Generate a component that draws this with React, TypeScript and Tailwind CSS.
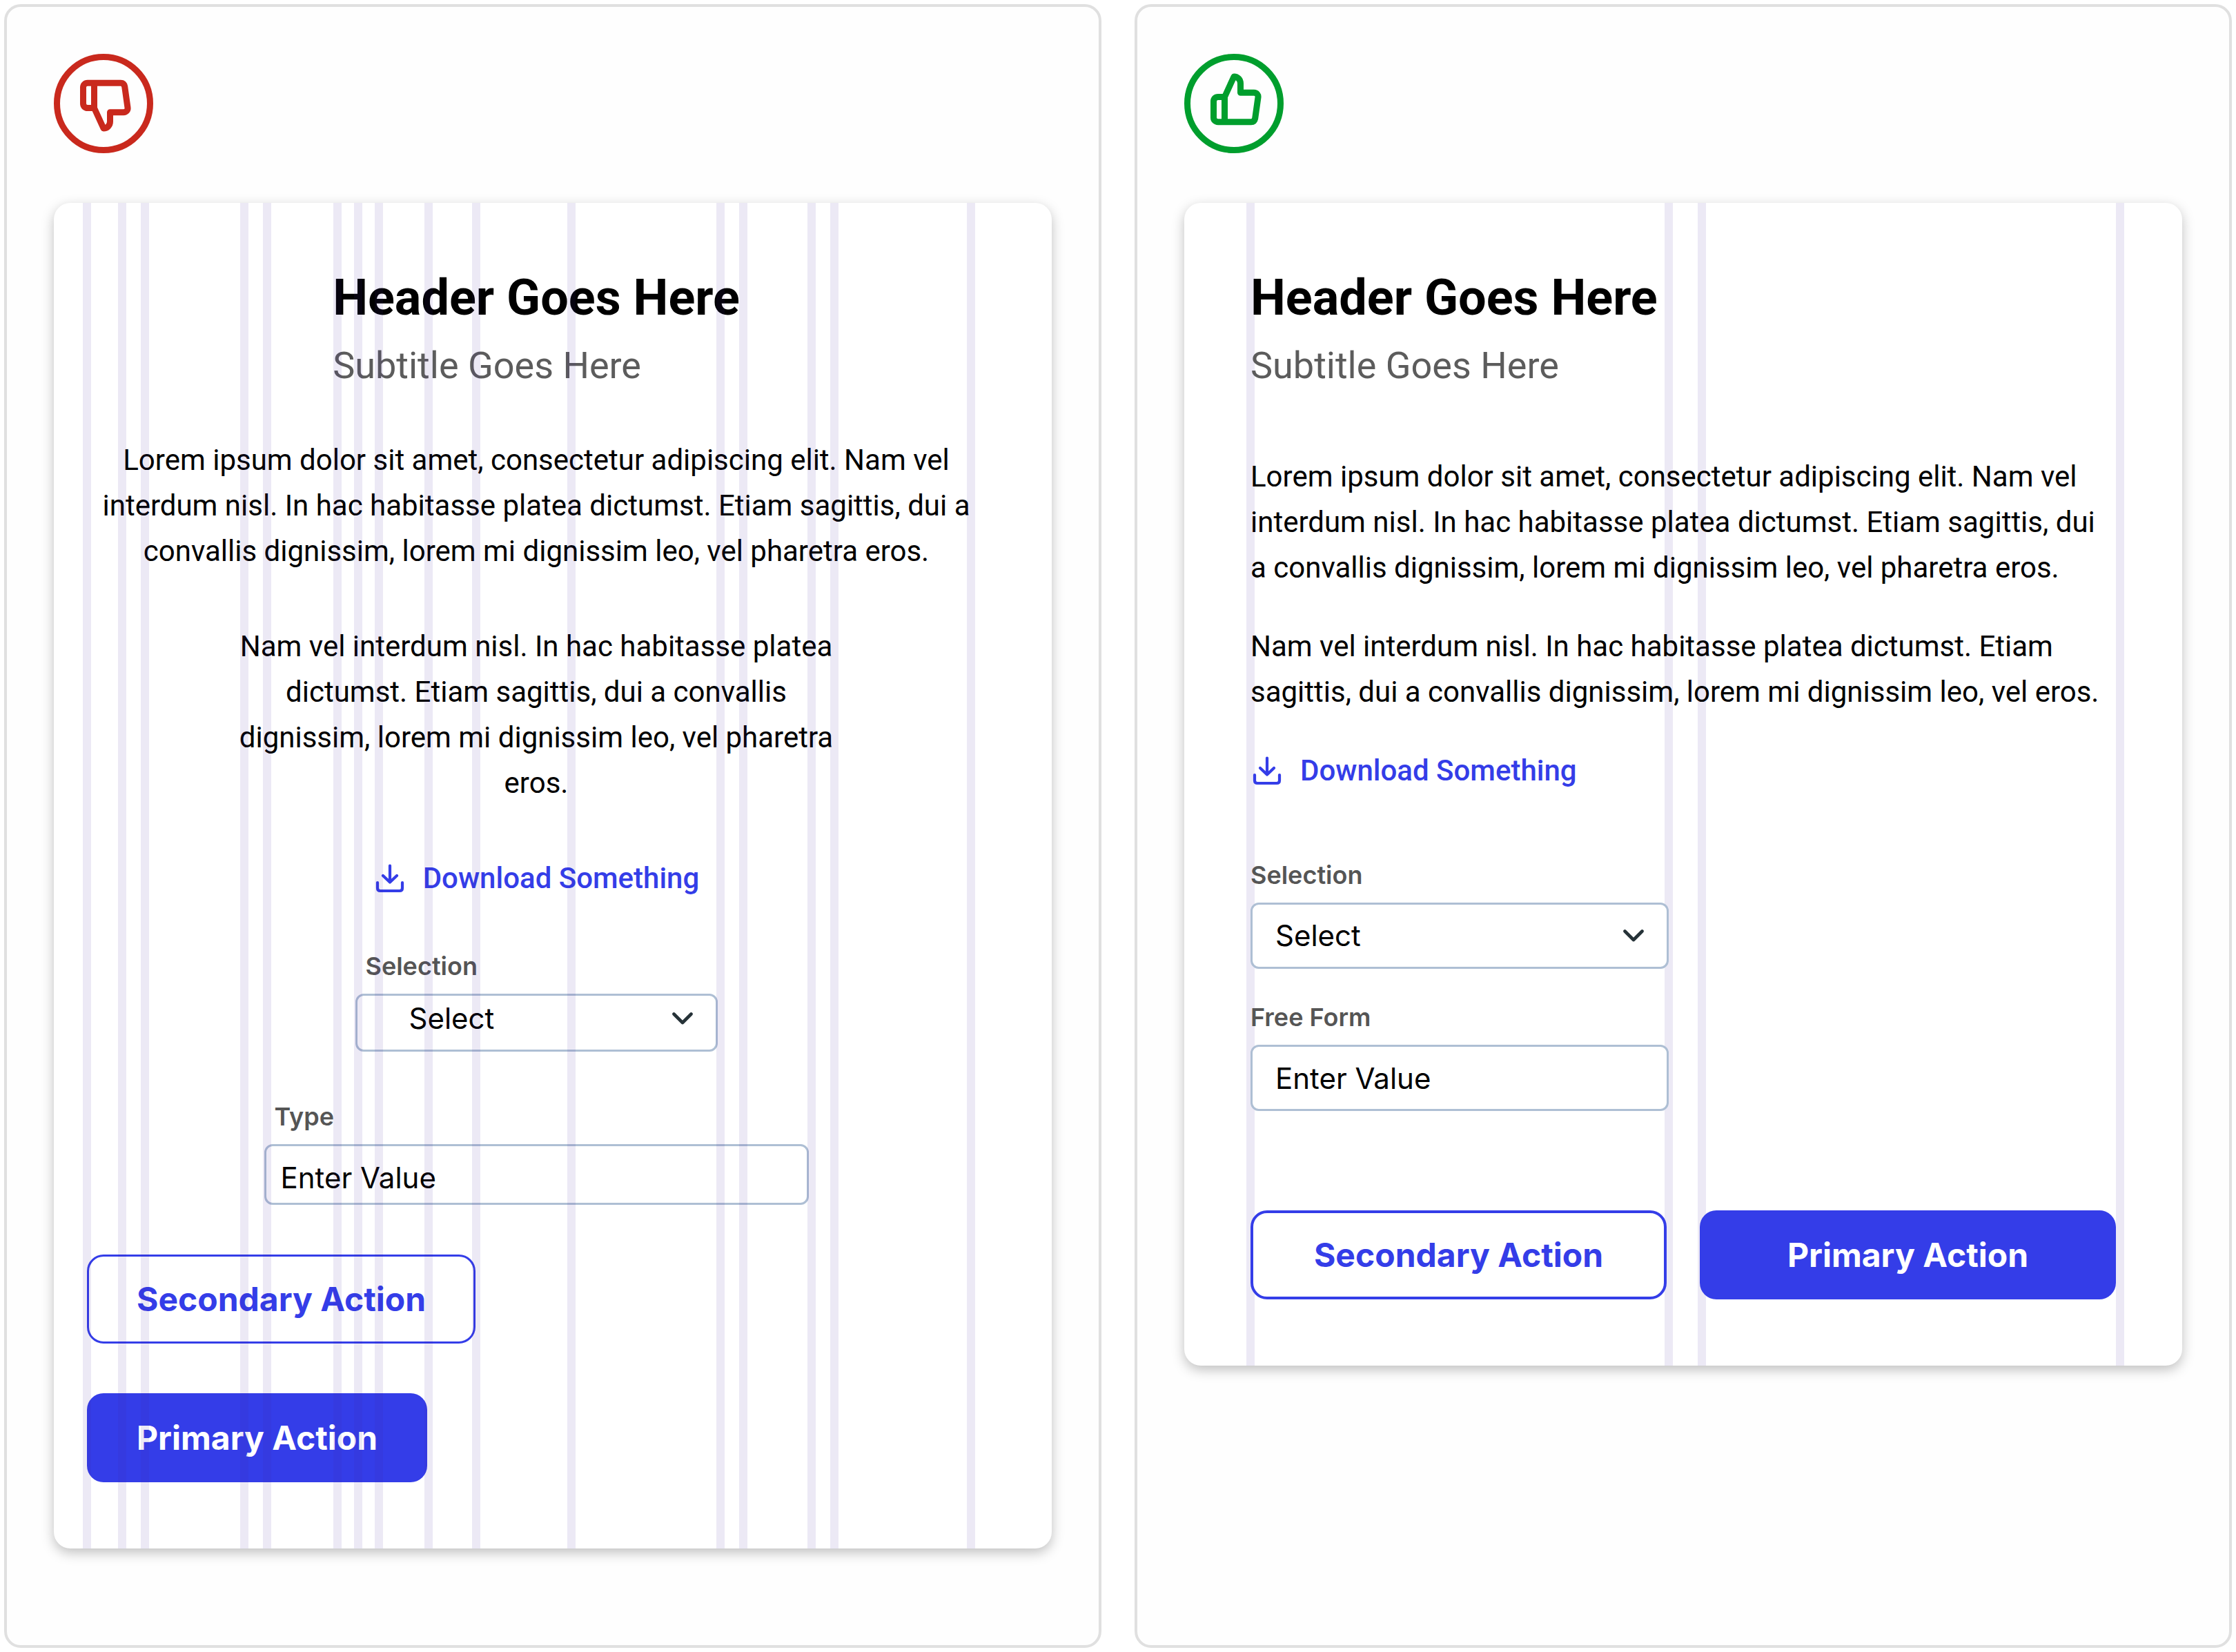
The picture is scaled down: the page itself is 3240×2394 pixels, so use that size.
import type { ReactNode } from 'react';

const leftGuides = [
  'left-[42px]', 'left-[93px]', 'left-[126px]', 'left-[270px]', 'left-[303px]', 'left-[405px]',
  'left-[435px]', 'left-[465px]', 'left-[537px]', 'left-[606px]', 'left-[744px]', 'left-[960px]',
  'left-[993px]', 'left-[1092px]', 'left-[1125px]', 'left-[1323px]',
];
const rightGuides = ['left-[90px]', 'left-[696px]', 'left-[744px]', 'left-[1350px]'];

function Guides({ positions }: { positions: string[] }) {
  return (
    <div aria-hidden="true" className="pointer-events-none absolute inset-0 overflow-hidden rounded-3xl">
      {positions.map((left) => (
        <span key={left} className={`absolute inset-y-0 w-3 bg-[#41239b]/10 ${left}`} />
      ))}
    </div>
  );
}

function ThumbIcon({ down = false }: { down?: boolean }) {
  return (
    <svg
      viewBox="0 0 144 144"
      role="img"
      aria-label={down ? "Don't" : 'Do'}
      className={`size-36 ${down ? 'text-[#c9291d]' : 'text-[#009e2d]'}`}
      fill="none"
      stroke="currentColor"
      strokeWidth="9"
      strokeLinejoin="round"
      strokeLinecap="round"
    >
      <circle cx="72" cy="72" r="67.5" />
      <g transform={down ? 'matrix(1 0 0 -1 0 141)' : undefined}>
        <path d="M58.5 98.7V62.5L72 33C77.5 33 81.5 37.5 81.5 43V56.2H101C105 56.2 107.5 59.5 107 63L102.7 93.5C102 97 100 98.7 97 98.7H49C45 98.7 42.5 96 42.5 92.5V69C42.5 65 45 62.5 49 62.5H58.5" />
      </g>
    </svg>
  );
}

function DownloadIcon() {
  return (
    <svg viewBox="0 0 48 48" aria-hidden="true" className="size-12 shrink-0" fill="none" stroke="currentColor" strokeWidth="4.2" strokeLinecap="round" strokeLinejoin="round">
      <path d="M24 5.5V29M14 20L24 29.500L34 20" />
      <path d="M6 30V38C6 40.500 7.500 42 10 42H38C40.500 42 42 40.500 42 38V30" />
    </svg>
  );
}

function Chevron() {
  return (
    <svg viewBox="0 0 30 18" aria-hidden="true" className="h-[18px] w-[30px]" fill="none" stroke="#263238" strokeWidth="4.6" strokeLinecap="round" strokeLinejoin="round">
      <path d="M2.5 2.500L15 15L27.500 2.500" />
    </svg>
  );
}

function Panel({ children }: { children: ReactNode }) {
  return <section className="flex-1 rounded-3xl border-4 border-[#e0e0e0] bg-[#fefefe] px-[68px] pt-[68px] pb-[140px]">{children}</section>;
}

function CardHeader() {
  return (
    <header>
      <h1 className="text-[72px] leading-[84px] font-bold">Header Goes Here</h1>
      <p className="mt-6 text-[54px] leading-[64px] text-[#5c5c5c]">Subtitle Goes Here</p>
    </header>
  );
}

function DownloadLink() {
  return (
    <a href="#download" className="flex items-center gap-6 font-medium text-[#343de8]">
      <DownloadIcon />
      Download Something
    </a>
  );
}

export default function App() {
  return (
    <main className="flex gap-12 bg-white p-[6px] font-[Roboto,sans-serif] text-[42px] leading-[66px] text-black">
      <Panel>
        <ThumbIcon down />
        <article className="relative mt-[72px] rounded-3xl bg-white pt-24 pr-24 pb-24 pl-12 shadow-[0_6px_18px_rgba(0,0,0,0.25)]">
          <div className="flex flex-col items-center">
            <CardHeader />
            <p className="mt-[72px] text-center">
              Lorem ipsum dolor sit amet, consectetur adipiscing elit. Nam vel interdum nisl. In hac habitasse platea dictumst. Etiam sagittis, dui a convallis dignissim, lorem mi dignissim leo, vel pharetra eros.
            </p>
            <p className="mt-[72px] w-[870px] text-center">
              Nam vel interdum nisl. In hac habitasse platea dictumst. Etiam sagittis, dui a convallis dignissim, lorem mi dignissim leo, vel pharetra eros.
            </p>
            <div className="mt-[72px]">
              <DownloadLink />
            </div>
            <div className="mt-[72px] w-[525px]">
              <label htmlFor="selection-centered" className="block pl-[15px] font-[Inter,sans-serif] text-4xl leading-[44px] font-semibold text-[#555555]">Selection</label>
              <div className="relative mt-[18px]">
                <select id="selection-centered" className="block h-[84px] w-full appearance-none rounded-xl border-[3px] border-[#aebfd4] bg-white pb-3 pl-[75px] font-[Inter,sans-serif] text-[42px]">
                  <option>Select</option>
                </select>
                <span className="pointer-events-none absolute inset-y-0 right-9 flex items-center pb-3"><Chevron /></span>
              </div>
            </div>
            <div className="mt-[72px] w-[789px]">
              <label htmlFor="type" className="block pl-[15px] font-[Inter,sans-serif] text-4xl leading-[44px] font-semibold text-[#555555]">Type</label>
              <input id="type" defaultValue="Enter Value" className="mt-[18px] block h-[88px] w-full rounded-xl border-[3px] border-[#aebfd4] bg-white px-[21px] pt-2 font-[Inter,sans-serif] text-[42px]" />
            </div>
          </div>
          <div className="mt-[72px] flex flex-col items-start gap-[72px] font-[Inter,sans-serif] text-5xl font-bold">
            <button type="button" className="h-[129px] rounded-3xl border-[3px] border-[#343de8] px-[69px] text-[#343de8]">Secondary Action</button>
            <button type="button" className="h-[129px] rounded-3xl bg-[#343de8] px-[72px] text-white">Primary Action</button>
          </div>
          <Guides positions={leftGuides} />
        </article>
      </Panel>

      <Panel>
        <ThumbIcon />
        <article className="relative mt-[72px] rounded-3xl bg-white p-24 shadow-[0_6px_18px_rgba(0,0,0,0.25)]">
          <Guides positions={rightGuides} />
          <div className="relative">
            <CardHeader />
            <p className="mt-24">
              Lorem ipsum dolor sit amet, consectetur adipiscing elit. Nam vel interdum nisl. In hac habitasse platea dictumst. Etiam sagittis, dui a convallis dignissim, lorem mi dignissim leo, vel pharetra eros.
            </p>
            <p className="mt-12">
              Nam vel interdum nisl. In hac habitasse platea dictumst. Etiam sagittis, dui a convallis dignissim, lorem mi dignissim leo, vel eros.
            </p>
            <div className="mt-12 flex">
              <DownloadLink />
            </div>
            <div className="mt-24 w-[606px]">
              <label htmlFor="selection-aligned" className="block font-[Inter,sans-serif] text-4xl leading-[44px] font-semibold text-[#555555]">Selection</label>
              <div className="relative mt-[18px]">
                <select id="selection-aligned" className="block h-24 w-full appearance-none rounded-xl border-[3px] border-[#aebfd4] bg-white pl-[33px] font-[Inter,sans-serif] text-[42px]">
                  <option>Select</option>
                </select>
                <span className="pointer-events-none absolute inset-y-0 right-9 flex items-center"><Chevron /></span>
              </div>
              <label htmlFor="free-form" className="mt-12 block font-[Inter,sans-serif] text-4xl leading-[44px] font-semibold text-[#555555]">Free Form</label>
              <input id="free-form" defaultValue="Enter Value" className="mt-[18px] block h-24 w-full rounded-xl border-[3px] border-[#aebfd4] bg-white px-[33px] font-[Inter,sans-serif] text-[42px]" />
            </div>
            <div className="mt-36 grid grid-cols-2 gap-12 font-[Inter,sans-serif] text-5xl font-bold">
              <button type="button" className="h-[129px] rounded-3xl border-4 border-[#343de8] bg-white text-[#343de8]">Secondary Action</button>
              <button type="button" className="h-[129px] rounded-3xl bg-[#343de8] text-white">Primary Action</button>
            </div>
          </div>
        </article>
      </Panel>
    </main>
  );
}
